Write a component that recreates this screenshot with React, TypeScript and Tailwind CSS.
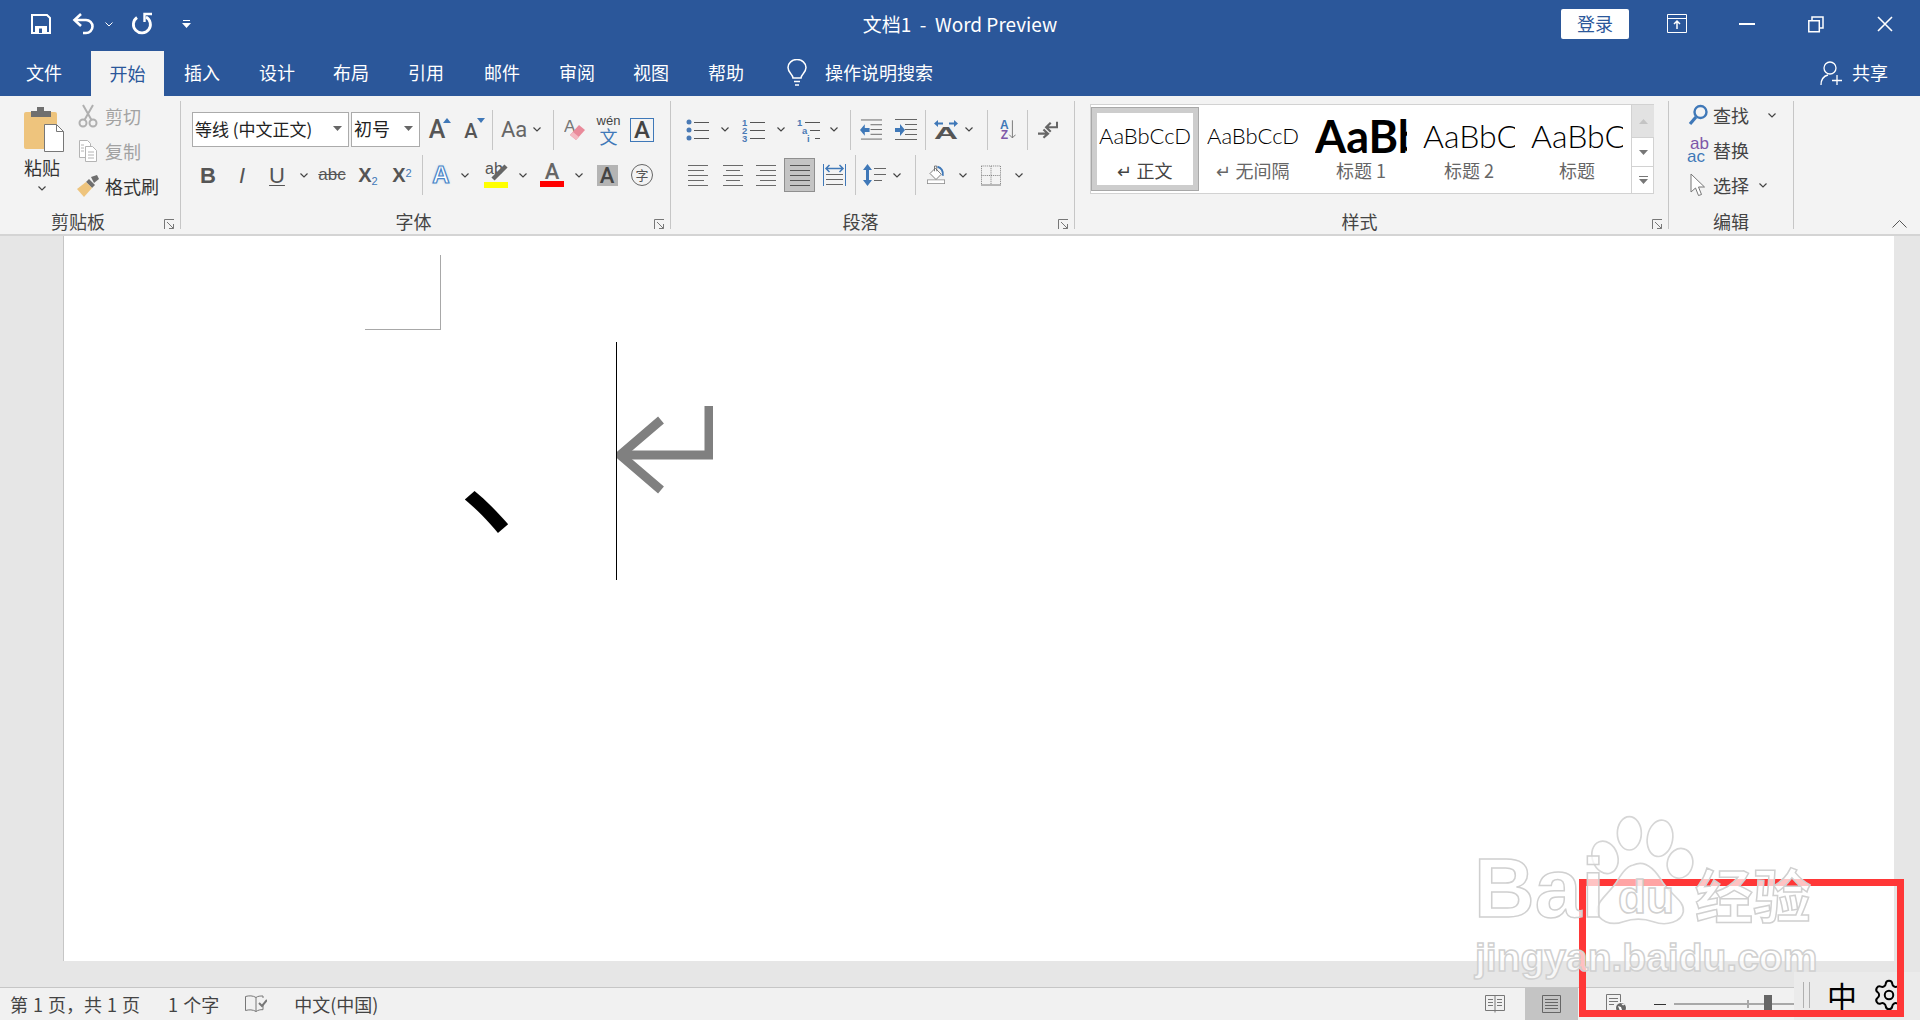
import React from "react";
import { Settings } from "lucide-react";

type P = { c?: string; children?: React.ReactNode };
const C = ({ c = "", children }: P) => <div className={"flex shrink-0 items-center justify-center " + c}>{children}</div>;

const Chev = () => (
  <svg width="8" height="5" viewBox="0 0 8 5" className="shrink-0"><path d="M.5.5 4 4 7.5.5" fill="none" stroke="#444" strokeWidth="1.2" /></svg>
);
const Div = () => <div className="h-[40px] w-px shrink-0 bg-[#c6c6c6]" />;
const Launcher = () => (
  <svg width="11" height="11" viewBox="0 0 11 11" className="absolute bottom-[-1px] right-[5px]">
    <path d="M.5 10V.5H10M3 3l6.5 6.5M5 9.5h4.5V5" fill="none" stroke="#777" />
  </svg>
);
const Lines = ({ rows, w = 24, h = 22, color = "#6a6a6a" }: { rows: [number, number, number][]; w?: number; h?: number; color?: string }) => (
  <svg width={w} height={h} viewBox={`0 0 ${w} ${h}`} className="shrink-0">
    {rows.map(([y, a, b], i) => <path key={i} d={`M${a} ${y + 0.5}H${b}`} stroke={color} />)}
  </svg>
);
const Group = ({ c, label, launcher = true, lc = "pr-[24px]", children }: { c: string; label: string; launcher?: boolean; lc?: string; children: React.ReactNode }) => (
  <div className={"relative flex shrink-0 flex-col border-r border-[#c6c6c6] " + c}>
    <div className="flex-1">{children}</div>
    <div className={"h-[18px] text-center text-[18px] leading-[20px] text-[#444] " + lc}>{label}</div>
    {launcher && <Launcher />}
  </div>
);
const Sample = ({ c, children }: P) => (
  <div className={"h-[42px] w-[92px] overflow-hidden whitespace-nowrap text-center leading-[42px] text-black [font-family:'Lato',sans-serif] " + c}>{children}</div>
);
const StyleItem = ({ sample, sc, cap, sel = false, cc = "text-[#666]" }: { sample: string; sc: string; cap: string; sel?: boolean; cc?: string }) => (
  <div className={"flex h-[84px] w-[108px] shrink-0 flex-col items-center " + (sel ? "border border-[#a8a8a8] pt-[7px] shadow-[inset_0_0_0_5px_#cdcdcd]" : "pt-[8px]")}>
    <Sample c={sc}>{sample}</Sample>
    <div className={"mt-[1px] text-[18px] leading-[24px] " + cc}>{cap}</div>
  </div>
);

const Save = () => (
  <svg width="20" height="20" viewBox="0 0 20 20"><path d="M1 1h15l3 3v15H1z" fill="none" stroke="#fff" strokeWidth="2" /><path d="M4 12h12v7H4z" fill="#fff" /><path d="M8 14.500h3V19H8z" fill="#2b579a" /></svg>
);
const Undo = () => (
  <svg width="24" height="24" viewBox="0 0 24 24" fill="none" stroke="#fff" strokeWidth="2.6"><path d="M10 2 3.500 8l6.500 6" /><path d="M4 8h11a6 6 0 0 1 0 13h-3" /></svg>
);
const Redo = () => (
  <svg width="22" height="24" viewBox="0 0 22 24" fill="none" stroke="#fff" strokeWidth="2.8"><path d="M6 5.500A8.500 8.500 0 1 0 15 5" /><path d="M21 2h-7.500v8" strokeWidth="2.4" /></svg>
);

const Paste = () => (
  <svg width="41" height="47" viewBox="0 0 41 47">
    <rect x="0" y="6" width="33" height="37" rx="2" fill="#eec47d" />
    <path d="M7 5h6V1h7v4h7v6H7z" fill="#6f6f6f" />
    <path d="M20.500 18.500h12l7 7v20h-19z" fill="#fff" stroke="#777" />
    <path d="M32.500 18.500v7h7" fill="none" stroke="#777" />
  </svg>
);
const Scissors = () => (
  <svg width="20" height="24" viewBox="0 0 20 24" fill="none" stroke="#b0b0b0" strokeWidth="2"><circle cx="5" cy="19" r="3.500" /><circle cx="15" cy="19" r="3.500" /><path d="M6.500 16 15 1M13.500 16 5 1" /></svg>
);
const Copy = () => (
  <svg width="20" height="24" viewBox="0 0 20 24" fill="#fff" stroke="#b4b4b4"><path d="M1.500 1.500h8l3 3v14h-11z" /><path d="M7.500 7.500h7l4 4v11h-11z" /><path d="M10 13h6M10 16h6M10 19h6M3 6h3M3 9h3M3 12h3" /></svg>
);
const Brush = () => (
  <svg width="24" height="24" viewBox="0 0 24 24"><path d="M15 3l6-2 2 4-5 4z" fill="#6f6f6f" /><path d="M13 5l6 6-3 3-6-6z" fill="#6f6f6f" /><path d="M10 8l6 6-8 9-7-8z" fill="#eec47d" /></svg>
);
const Eraser = () => (
  <svg width="22" height="24" viewBox="0 0 22 24"><text x="0" y="14" fontSize="17" fill="#777" fontFamily="Liberation Sans">A</text><path d="M15 7l6 5-9 10-6-5z" fill="#e98a9a" /><path d="M9 14l6 5-3 3-6-5z" fill="#f4b9c2" /></svg>
);
const Highlight = () => (
  <div className="relative h-[24px] w-[24px]">
    <span className="absolute left-[1px] top-[-3px] text-[16px] leading-[18px] text-[#555] [font-family:'Liberation_Sans',sans-serif]">ab</span>
    <svg width="24" height="18" viewBox="0 0 24 18" className="absolute left-0 top-0"><path d="M9 16 22 3" stroke="#666" strokeWidth="4.500" fill="none" /></svg>
    <div className="absolute bottom-[-1px] h-[6px] w-[24px] bg-[#ffff00]" />
  </div>
);
const Bullets = ({ kind }: { kind: number }) => (
  <svg width="24" height="24" viewBox="0 0 24 24">
    {kind === 0 && [4, 12, 20].map((y) => <circle key={y} cx="3" cy={y} r="2.500" fill="#4a7ab5" />)}
    {kind === 1 && ["1", "2", "3"].map((t, i) => <text key={t} x="0" y={7.5 + i * 8} fontSize="9.5" fontWeight="700" fill="#4a7ab5" fontFamily="Liberation Sans">{t}</text>)}
    {kind === 2 && ["1", "a", "i"].map((t, i) => <text key={t} x={i * 5} y={7.5 + i * 8} fontSize="9.5" fontWeight="700" fill="#4a7ab5" fontFamily="Liberation Sans">{t}</text>)}
    <path d={kind === 2 ? "M8 4.500H23M13 12.500H23M18 20.500H23" : "M8 4.500H23M8 12.500H23M8 20.500H23"} stroke="#555" />
  </svg>
);
const Indent = ({ flip = false }: { flip?: boolean }) => (
  <svg width="23" height="22" viewBox="0 0 23 22">
    <path d="M1 .5H23M11 5.500H23M11 10.500H23M11 15.500H23M1 20.500H23" stroke="#666" />
    <path d={flip ? "M1 9h5V5l5 6-5 6v-4H1z" : "M10 9H5V5l-5 6 5 6v-4h5z"} fill="#3f78b8" />
  </svg>
);
const Dir = () => (
  <svg width="24" height="20" viewBox="0 0 24 20"><text x="0" y="19" fontSize="17" fontWeight="700" fill="#555" fontFamily="Liberation Sans" textLength="24" lengthAdjust="spacingAndGlyphs">A</text><path d="M0 3.500 4 0v2.500h5v2H4V7zM24 3.500 20 0v2.500h-5v2h5V7z" fill="#3f78b8" /></svg>
);
const Sort = () => (
  <svg width="20" height="23" viewBox="0 0 20 23"><text x="0" y="11" fontSize="15" fontWeight="700" fill="#3f78b8" fontFamily="Liberation Sans">A</text><text x="1" y="23" fontSize="15" fontWeight="700" fill="#7e57a8" fontFamily="Liberation Sans">Z</text><path d="M15.500 0v22M11.500 18l4 4 4-4" fill="none" stroke="#777" strokeWidth="1.200" /></svg>
);
const Rtl = () => (
  <svg width="22" height="20" viewBox="0 0 22 20" fill="none" stroke="#666" strokeWidth="2.400"><path d="M21 1v6H10M14 2 9 7l5 5" /><path d="M0 14h10M6 9.500l5 4.500-5 4.500" /></svg>
);
const Distribute = () => (
  <svg width="23" height="22" viewBox="0 0 23 22"><path d="M.5 0v22M22.500 0v22" stroke="#3f78b8" /><path d="M3 4.500h17M6.500 1 3 4.500 6.500 8M16.500 1 20 4.500 16.500 8" fill="none" stroke="#3f78b8" strokeWidth="1.500" /><path d="M3 10.500h17M3 15.500h17M3 20.500h17" stroke="#666" /></svg>
);
const LineSpacing = () => (
  <svg width="23" height="22" viewBox="0 0 23 22"><path d="M4.500 0 9 6H6v10h3l-4.500 6L0 16h3V6H0z" fill="#3f78b8" /><path d="M11 4.500h12M11 10.500h12M11 16.500h8" stroke="#666" /></svg>
);
const Shading = () => (
  <svg width="24" height="24" viewBox="0 0 24 24"><path d="M11 3l8 8-7 7-8-8z" fill="#fff" stroke="#555" /><path d="M10 7V0h3v7" fill="none" stroke="#555" /><path d="M14 1c5 1 8 6 7 12" fill="none" stroke="#3f78b8" strokeWidth="2.600" /><rect x=".5" y="18.500" width="23" height="5" fill="#fff" stroke="#888" /></svg>
);
const Border = () => (
  <svg width="21" height="21" viewBox="0 0 21 21" fill="none" stroke="#777"><path d="M.5.500h20M.5.500v20M20.500.500v20M10.500.5v20M.5 10.500h20" strokeDasharray="1 1" /><path d="M0 20.500h21" /></svg>
);
const Search = () => (
  <svg width="20" height="22" viewBox="0 0 20 22" fill="none" stroke="#3f78b8" strokeWidth="2.400"><circle cx="12.500" cy="8" r="6" /><path d="M8 13 2 20" strokeWidth="3.200" /></svg>
);
const Cursor = () => (
  <svg width="16" height="24" viewBox="0 0 16 24"><path d="M1 1v18l4.500-4 3 7.500 3-1-3-7.500h6z" fill="#fff" stroke="#777" /></svg>
);
const Book = ({ c = "#777" }: { c?: string }) => (
  <svg width="20" height="18" viewBox="0 0 20 18" fill="none" stroke={c}><path d="M.5.500h19v15H.5zM10 .5v17M3 4.500h5M3 7.500h5M3 10.500h5M12 4.500h5M12 7.500h5M12 10.500h5" /></svg>
);
const Page = () => (
  <svg width="20" height="18" viewBox="0 0 20 18" fill="none" stroke="#666"><path d="M.5.500h18v17H.5zM3 4.500h13M3 7.500h13M3 10.500h13M3 13.500h13" /></svg>
);
const Web = () => (
  <svg width="21" height="20" viewBox="0 0 21 20"><path d="M.5.500h14v16H.5z M3 4.500h9M3 7.500h9M3 10.500h5" fill="none" stroke="#777" /><circle cx="15" cy="14" r="5.500" fill="#666" stroke="#fff" /><path d="M12 12l3 1 1 3-2 1zM15 9.500l2 2 2-1" fill="#fff" /></svg>
);

export default function App() {
  return (
    <div className="relative flex h-[1020px] w-[1920px] flex-col overflow-hidden bg-[#e6e6e6] text-[#444] [font-family:'Noto_Sans_CJK_SC','Noto_Sans',sans-serif]">
      {/* title bar */}
      <div className="flex h-[50px] shrink-0 items-center bg-[#2b579a] pb-[2px] text-white">
        <div className="flex w-[360px] items-center pl-[24px]">
          <C c="w-[34px]"><Save /></C>
          <C c="ml-[12px] w-[26px]"><Undo /></C>
          <C c="w-[26px]"><svg width="8" height="5" viewBox="0 0 8 5"><path d="M.5.5 4 4 7.5.5" fill="none" stroke="#fff" /></svg></C>
          <C c="w-[40px]"><Redo /></C>
          <C c="w-[48px]"><svg width="9" height="9" viewBox="0 0 9 9" fill="#fff"><path d="M1 0h7v1H1zM0 3h9L4.500 8z" /></svg></C>
        </div>
        <div className="flex-1 text-center text-[19px] leading-[46px]">文档1&nbsp;&nbsp;-&nbsp;&nbsp;Word Preview</div>
        <div className="flex w-[360px] items-center pl-[1px]">
          <div className="h-[30px] w-[68px] rounded-[2px] bg-white text-center text-[18px] leading-[28px] text-[#2b579a]">登录</div>
          <C c="w-[96px]"><svg width="20" height="20" viewBox="0 0 20 20" fill="none" stroke="#fff"><path d="M.5.500h19v18H.5zM1 4.500h18" /><path d="M10 15V7M7 10l3-3 3 3" strokeWidth="1.500" /></svg></C>
          <C c="w-[44px]"><div className="h-[2px] w-[16px] bg-white" /></C>
          <C c="w-[94px]"><svg width="16" height="17" viewBox="0 0 16 17" fill="none" stroke="#fff" strokeWidth="1.500"><path d="M.8 4.800h10.500v11H.8zM4 4.500V1h11v11h-3.500" /></svg></C>
          <C c="w-[44px]"><svg width="16" height="16" viewBox="0 0 16 16" fill="none" stroke="#fff" strokeWidth="1.600"><path d="M1 1l14 14M15 1 1 15" /></svg></C>
        </div>
      </div>
      {/* tabs */}
      <div className="flex h-[46px] shrink-0 items-stretch bg-[#2b579a] pl-[7px] text-[18px] leading-[44px] text-white">
        <div className="w-[74px] text-center">文件</div>
        <div className="ml-[10px] mt-[1px] w-[73px] bg-[#f3f3f3] text-center text-[#2b579a]">开始</div>
        <div className="w-[76px] text-center">插入</div>
        <div className="w-[74px] text-center">设计</div>
        <div className="w-[74px] text-center">布局</div>
        <div className="w-[76px] text-center">引用</div>
        <div className="w-[76px] text-center">邮件</div>
        <div className="w-[74px] text-center">审阅</div>
        <div className="w-[74px] text-center">视图</div>
        <div className="w-[76px] text-center">帮助</div>
        <C c="ml-[16px] w-[34px]">
          <svg width="20" height="28" viewBox="0 0 20 28" fill="none" stroke="#fff" strokeWidth="1.500"><path d="M6 19c0-4-5-5-5-10.500a9 8 0 0 1 18 0C19 14 14 15 14 19z" /><path d="M7 22.500h6M8 26h4" /></svg>
        </C>
        <div className="ml-[11px]">操作说明搜索</div>
        <div className="ml-auto flex items-center pr-[32px]">
          <svg width="24" height="26" viewBox="0 0 24 26" fill="none" stroke="#fff" strokeWidth="1.300"><circle cx="10" cy="8" r="6" /><path d="M1 25c0-6 3-9 7-10M17 15v10M12 20.500h10" /></svg>
          <span className="ml-[8px] mt-[-2px]">共享</span>
        </div>
      </div>
      {/* ribbon */}
      <div className="flex h-[140px] shrink-0 border-b-2 border-[#d4d4d4] bg-[#f3f3f3] pb-[5px] pt-[5px] text-[18px]">
        <Group c="w-[181px]" label="剪贴板">
          <div className="flex">
            <div className="flex w-[75px] flex-col items-center pl-[13px] pt-[5px]">
              <Paste />
              <div className="mt-[1px] ml-[-4px] leading-[26px] text-[#333]">粘贴</div>
              <div className="ml-[-4px] mt-[6px]"><Chev /></div>
            </div>
            <div className="flex flex-col gap-[7px] pt-[1px]">
              <div className="flex h-[28px] items-center text-[#a2a2a2]"><C c="w-[26px]"><Scissors /></C><span className="ml-[4px]">剪切</span></div>
              <div className="flex h-[28px] items-center text-[#a2a2a2]"><C c="w-[26px]"><Copy /></C><span className="ml-[4px]">复制</span></div>
              <div className="flex h-[28px] items-center text-[#333]"><C c="w-[26px]"><Brush /></C><span className="ml-[4px] whitespace-nowrap">格式刷</span></div>
            </div>
          </div>
        </Group>
        <Group c="w-[490px]" label="字体">
          <div className="pl-[11px] pt-[11px]">
            <div className="flex h-[35px] items-center">
              <div className="flex h-[35px] w-[157px] shrink-0 items-center border border-[#ababab] bg-white pb-[2px] pl-[2px] pr-[6px] text-[17px] text-[#222]">
                <span className="flex-1 whitespace-nowrap">等线 (中文正文)</span>
                <svg width="9" height="5" viewBox="0 0 9 5"><path d="M0 0h9L4.500 5z" fill="#666" /></svg>
              </div>
              <div className="ml-[2px] flex h-[35px] w-[69px] shrink-0 items-center border border-[#ababab] bg-white pb-[2px] pl-[2px] pr-[6px] text-[#222]">
                <span className="flex-1">初号</span>
                <svg width="9" height="5" viewBox="0 0 9 5"><path d="M0 0h9L4.500 5z" fill="#666" /></svg>
              </div>
              <C c="w-[34px]"><div className="relative text-[25px] font-medium leading-[30px] text-[#555] [font-family:'Roboto',sans-serif]">A<svg width="8" height="5" viewBox="0 0 8 5" className="absolute right-[-6px] top-[3px]"><path d="M4 0l4 5H0z" fill="#3f78b8" /></svg></div></C>
              <C c="w-[34px]"><div className="relative mt-[3px] text-[20px] font-medium leading-[26px] text-[#555] [font-family:'Roboto',sans-serif]">A<svg width="8" height="5" viewBox="0 0 8 5" className="absolute right-[-7px] top-[0px]"><path d="M0 0h8L4 5z" fill="#3f78b8" /></svg></div></C>
              <C c="w-[9px]"><Div /></C>
              <div className="flex w-[52px] shrink-0 items-center pl-[4px] text-[22px] text-[#666] [font-family:'Roboto',sans-serif]">Aa<span className="ml-[6px]"><Chev /></span></div>
              <C c="w-[8px]"><Div /></C>
              <C c="w-[35px]"><Eraser /></C>
              <C c="w-[33px]"><div className="flex flex-col items-center text-[13px] leading-[13px] text-[#444] [font-family:'Liberation_Sans',sans-serif]">wén<span className="text-[18px] leading-[19px] text-[#3f78b8] [font-family:'Noto_Sans_CJK_SC',sans-serif]">文</span></div></C>
              <C c="w-[34px]"><div className="h-[24px] w-[24px] border border-[#3f78b8] text-center text-[24px] font-medium leading-[22px] text-[#444] [font-family:'Roboto',sans-serif]">A</div></C>
            </div>
            <div className="mt-[14px] flex h-[28px] items-center text-[#555] [font-family:'Liberation_Sans',sans-serif]">
              <C c="w-[32px] text-[22px] font-bold">B</C>
              <C c="w-[36px] text-[22px] italic">I</C>
              <C c="w-[34px] text-[22px] underline decoration-1 underline-offset-2">U</C>
              <C c="w-[20px]"><Chev /></C>
              <C c="w-[36px] text-[17px] line-through">abc</C>
              <C c="w-[36px]"><span className="text-[20px] font-bold">X<sub className="text-[11px] font-normal text-[#3f78b8]">2</sub></span></C>
              <C c="w-[32px]"><span className="text-[20px] font-bold">X<sup className="text-[11px] font-normal text-[#3f78b8]">2</sup></span></C>
              <C c="w-[8px]"><Div /></C>
              <C c="w-[30px]"><span className="text-[24px] font-bold leading-[30px] text-white [-webkit-text-stroke:1.2px_#4a86c8] [text-shadow:0_0_3px_#a8c8e8]">A</span></C>
              <C c="w-[18px]"><Chev /></C>
              <C c="w-[44px]"><Highlight /></C>
              <C c="w-[10px]"><Chev /></C>
              <C c="w-[48px]"><div className="flex h-[24px] w-[24px] flex-col items-center"><span className="text-[22px] font-medium leading-[18px] text-[#666] [font-family:'Roboto',sans-serif]">A</span><div className="mt-auto h-[6px] w-[24px] bg-[#ff0000]" /></div></C>
              <C c="w-[6px]"><Chev /></C>
              <C c="w-[50px]"><div className="h-[21px] w-[21px] bg-[#b4b4b4] text-center text-[22px] font-medium leading-[21px] text-[#444] [font-family:'Roboto',sans-serif]">A</div></C>
              <C c="w-[20px]"><div className="h-[22px] w-[22px] shrink-0 rounded-full border border-[#666] text-center text-[13px] leading-[19px] text-[#555] [font-family:'Noto_Sans_CJK_SC',sans-serif]">字</div></C>
            </div>
          </div>
        </Group>
        <Group c="w-[404px]" label="段落">
          <div className="pl-[11px] pt-[11px]">
            <div className="flex h-[35px] items-center">
              <C c="w-[32px]"><Bullets kind={0} /></C>
              <C c="w-[22px]"><Chev /></C>
              <C c="w-[36px]"><Bullets kind={1} /></C>
              <C c="w-[18px]"><Chev /></C>
              <C c="w-[38px]"><Bullets kind={2} /></C>
              <C c="w-[12px]"><Chev /></C>
              <C c="w-[20px]"><Div /></C>
              <C c="w-[22px]"><Indent /></C>
              <C c="ml-[6px] w-[34px]"><Indent flip /></C>
              <C c="w-[6px]"><Div /></C>
              <C c="w-[36px]"><Dir /></C>
              <C c="w-[10px]"><Chev /></C>
              <C c="w-[26px]"><Div /></C>
              <C c="w-[16px]"><Sort /></C>
              <C c="w-[22px]"><Div /></C>
              <C c="w-[20px]"><Rtl /></C>
            </div>
            <div className="mt-[14px] flex h-[28px] items-center">
              <C c="w-[32px]"><Lines rows={[[1, 2, 22], [6, 2, 18], [11, 2, 22], [16, 2, 18], [21, 2, 22]]} /></C>
              <C c="w-[38px]"><Lines rows={[[1, 2, 22], [6, 5, 19], [11, 2, 22], [16, 5, 19], [21, 2, 22]]} /></C>
              <C c="w-[28px]"><Lines rows={[[1, 2, 22], [6, 6, 22], [11, 2, 22], [16, 6, 22], [21, 2, 22]]} /></C>
              <C c="ml-[4px] h-[34px] w-[31px] border border-[#8f8f8f] bg-[#c4c4c4]"><Lines color="#555" rows={[[1, 2, 22], [6, 2, 22], [11, 2, 22], [16, 2, 22], [21, 2, 22]]} /></C>
              <C c="w-[38px]"><Distribute /></C>
              <C c="w-[4px]"><Div /></C>
              <C c="w-[34px]"><LineSpacing /></C>
              <C c="w-[12px]"><Chev /></C>
              <C c="w-[24px]"><Div /></C>
              <C c="w-[18px]"><Shading /></C>
              <C c="w-[36px]"><Chev /></C>
              <C c="w-[20px]"><Border /></C>
              <C c="w-[36px]"><Chev /></C>
            </div>
          </div>
        </Group>
        <Group c="w-[594px]" label="样式">
          <div className="ml-[15px] mt-[3px] flex h-[90px] w-[564px] border border-[#d2d2d2] bg-white">
            <div className="flex h-[84px] w-[540px] items-start pt-[2px]">
              <StyleItem sel sample="AaBbCcDc" sc="text-[22px] font-light" cap="↵ 正文" cc="text-[#444]" />
              <StyleItem sample="AaBbCcDc" sc="text-[22px] font-light" cap="↵ 无间隔" />
              <StyleItem sample="AaBbCcDc" sc="text-[45px] font-bold" cap="标题 1" />
              <StyleItem sample="AaBbC" sc="text-[32px] font-light" cap="标题 2" />
              <StyleItem sample="AaBbC" sc="text-[32px] font-light" cap="标题" />
            </div>
            <div className="flex w-[23px] shrink-0 flex-col border-l border-[#d2d2d2]">
              <C c="h-[32px] bg-[#e2e2e2]"><svg width="9" height="5" viewBox="0 0 9 5"><path d="M4.500 0 9 5H0z" fill="#c4c4c4" /></svg></C>
              <C c="h-[29px] border-t border-[#d2d2d2]"><svg width="9" height="5" viewBox="0 0 9 5"><path d="M0 0h9L4.500 5z" fill="#777" /></svg></C>
              <C c="flex-1 border-t border-[#d2d2d2]"><svg width="9" height="9" viewBox="0 0 9 9" fill="#777"><path d="M0 0h9v1H0zM0 3h9L4.500 8z" /></svg></C>
            </div>
          </div>
        </Group>
        <Group c="w-[125px]" label="编辑" launcher={false} lc="">
          <div className="flex flex-col gap-[7px] pl-[19px]">
            <div className="flex h-[28px] items-center"><C c="w-[20px]"><Search /></C><span className="ml-[5px]">查找</span><span className="ml-[19px]"><Chev /></span></div>
            <div className="flex h-[28px] items-center"><C c="w-[20px]"><div className="flex flex-col text-[17px] leading-[13px] [font-family:'Liberation_Sans',sans-serif]"><span className="pl-[3px] text-[#7e57a8]">ab</span><span className="text-[#3f78b8]">ac</span></div></C><span className="ml-[5px]">替换</span></div>
            <div className="flex h-[28px] items-center"><C c="w-[20px]"><Cursor /></C><span className="ml-[5px]">选择</span><span className="ml-[10px]"><Chev /></span></div>
          </div>
        </Group>
        <div className="flex flex-1 items-end justify-end pb-[1px] pr-[13px]">
          <svg width="15" height="8" viewBox="0 0 15 8"><path d="M.5 7.500 7.500.5l7 7" fill="none" stroke="#555" /></svg>
        </div>
      </div>
      {/* canvas */}
      <div className="h-[751px] shrink-0 pl-[63px] pr-[26px]">
        <div className="h-[725px] border-l border-[#c6c6c6] bg-white pl-[301px] pt-[19px]">
          <div className="h-[75px] w-[76px] border-b border-r border-[#a8a8a8]" />
          <div className="mt-[12px] flex h-[238px] items-start">
            <div className="h-[238px] w-[251px] shrink-0 pl-[92px] text-[150px] leading-[234px] text-black">、</div>
            <div className="h-[238px] w-px shrink-0 bg-black" />
            <svg width="96" height="100" viewBox="0 0 96 100" className="mt-[60px] shrink-0" fill="none" stroke="#808080" strokeWidth="8">
              <path d="M92 4v49H6" strokeWidth="9" />
              <path d="M44 18 3 53l41 35" strokeWidth="9" />
            </svg>
          </div>
        </div>
      </div>
      {/* status */}
      <div className="flex h-[33px] shrink-0 items-center border-t border-[#c6c6c6] bg-[#f1f1f1] pl-[10px] text-[18px] leading-[32px] text-[#444] [word-spacing:1px]">
        <span>第 1 页，共 1 页</span>
        <span className="ml-[28px]">1 个字</span>
        <svg width="22" height="18" viewBox="0 0 22 18" fill="none" stroke="#777" className="ml-[26px]"><path d="M11 2.500C8 .5 4 .5 .5 1.500v14c3.500-1 7.500-1 10.500 1 2-1.300 4-2 7-1.800V9" /><path d="M11 2.500v14M11 2.500C13 1 15 1 18 1v2" /><path d="M14 8l3 3 5-6" strokeWidth="2" /></svg>
        <span className="ml-[27px]">中文(中国)</span>
        <div className="ml-auto flex h-[32px] items-center">
          <Book />
          <C c="ml-[20px] h-[32px] w-[53px] bg-[#c4c4c4]"><Page /></C>
          <C c="ml-[28px] w-[21px]"><Web /></C>
          <div className="ml-[27px] h-px w-[12px] bg-[#333]" />
          <div className="relative ml-[8px] mr-[126px] h-[2px] w-[120px] bg-[#a8a8a8]">
            <div className="absolute left-[73px] top-[-3px] h-[8px] w-[2px] bg-[#a8a8a8]" />
            <div className="absolute left-[90px] top-[-8px] h-[18px] w-[8px] bg-[#666]" />
          </div>
        </div>
      </div>
      {/* IME toolbar over the status bar */}
      <div className="absolute bottom-0 right-0 flex h-[48px] w-[126px] items-center bg-[#ebebeb] pb-[3px] text-black">
        <div className="ml-[9px] h-[26px] w-[7px] border-x border-[#b0b0b0]" />
        <span className="ml-[17px] text-[30px] leading-[36px]">中</span>
        <Settings className="ml-[15px]" size={34} strokeWidth={1.4} />
      </div>
      {/* red highlight box */}
      <div className="absolute left-[1579px] top-[879px] h-[138px] w-[325px] border-[7px] border-[#ff3737]" />
      {/* watermark */}
      <div className="absolute left-[1420px] top-[800px] h-[220px] w-[500px] font-bold text-white/70 [font-family:'Liberation_Sans',sans-serif] [-webkit-text-stroke:1.5px_#d0d0d0]">
        <svg width="500" height="220" viewBox="0 0 1500 660" className="absolute inset-0" fill="#fff" fillOpacity="0.55" stroke="#d6d6d6" strokeWidth="5">
          <ellipse cx="555" cy="172" rx="38" ry="50" transform="rotate(-20 555 172)" />
          <ellipse cx="628" cy="100" rx="36" ry="50" />
          <ellipse cx="720" cy="115" rx="38" ry="55" transform="rotate(10 720 115)" />
          <ellipse cx="780" cy="190" rx="38" ry="45" transform="rotate(15 780 190)" />
          <path d="M640 195c40-20 70 20 90 55 25 35 65 55 60 85-5 30-50 45-90 30-30-10-60-10-90 0-40 15-75-5-78-30-3-30 30-50 55-85 15-25 30-50 53-55z" />
        </svg>
        <span className="absolute left-[54px] top-[44px] text-[84px] leading-[88px]">Bai</span>
        <span className="absolute left-[198px] top-[72px] text-[46px] leading-[50px]">du</span>
        <span className="absolute left-[275px] top-[58px] whitespace-nowrap text-[58px] leading-[70px] [font-family:'Noto_Sans_CJK_SC',sans-serif]">经验</span>
        <span className="absolute left-[55px] top-[133px] whitespace-nowrap text-[39px] leading-[50px]">jingyan.baidu.com</span>
      </div>
    </div>
  );
}
